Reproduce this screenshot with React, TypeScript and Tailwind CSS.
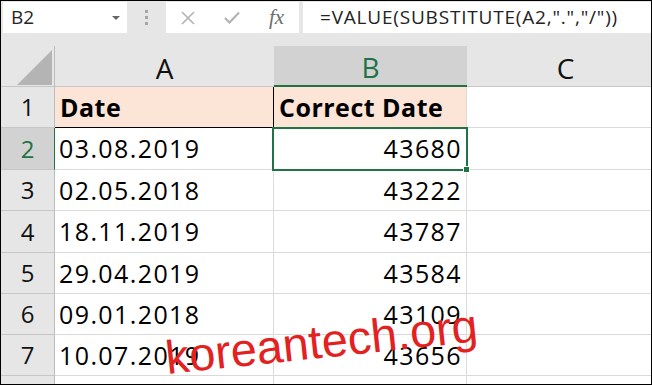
import React from "react";

const ROWS = [
  { n: 1, a: "Date", b: "Correct Date", h: "h-[41px]" },
  { n: 2, a: "03.08.2019", b: "43680", h: "h-[42px]" },
  { n: 3, a: "02.05.2018", b: "43222", h: "h-[41px]" },
  { n: 4, a: "18.11.2019", b: "43787", h: "h-[42px]" },
  { n: 5, a: "29.04.2019", b: "43584", h: "h-[41px]" },
  { n: 6, a: "09.01.2018", b: "43109", h: "h-[41px]" },
  { n: 7, a: "10.07.2019", b: "43656", h: "h-[41px]" },
];

function FormulaBar() {
  return (
    <div className="h-[45px] bg-[#e6e6e6] flex items-start pt-[1px] pl-[2px]">
      {/* name box */}
      <div className="w-[124px] h-[31px] bg-white flex items-center justify-between pl-[8px] pr-[7px]">
        <span className="text-[19px] leading-none text-[#262626]">B2</span>
        <svg width="8" height="4" viewBox="0 0 8 4">
          <polygon points="0,0 8,0 4,4" fill="#666" />
        </svg>
      </div>

      {/* grip dots */}
      <div className="w-[39px] h-[31px] flex flex-col items-center justify-center gap-[3px]">
        <div className="w-[3px] h-[3px] bg-[#a6a6a6]" />
        <div className="w-[3px] h-[3px] bg-[#a6a6a6]" />
        <div className="w-[3px] h-[3px] bg-[#a6a6a6]" />
      </div>

      {/* cancel / enter / fx */}
      <div className="w-[133px] h-[31px] bg-white flex items-center">
        <svg width="14" height="14" viewBox="0 0 14 14" className="ml-[15px]">
          <path d="M1 1 L13 13 M13 1 L1 13" stroke="#b3b3b3" strokeWidth="1.6" fill="none" />
        </svg>
        <svg width="16" height="13" viewBox="0 0 16 13" className="ml-[29px]">
          <path d="M1 7 L5.5 11.5 L15 1.5" stroke="#b3b3b3" strokeWidth="2.2" fill="none" />
        </svg>
        <span className="ml-[29px] text-[21px] leading-none italic text-[#6e6e6e] font-['Liberation_Serif',serif]">
          fx
        </span>
      </div>

      {/* formula */}
      <div className="ml-[4px] flex-1 h-[31px] bg-white flex items-center pl-[17px]">
        <span className="text-[19px] leading-none tracking-[0.8px] text-[#222]">
          =VALUE(SUBSTITUTE(A2,".","/"))
        </span>
      </div>
    </div>
  );
}

function HeaderRow() {
  return (
    <div className="flex h-[41px] bg-[#e6e6e6]">
      <div className="w-[54px] shrink-0 border-r border-b border-r-[#bdbdbd] border-b-[#c6c6c6] relative">
        <svg width="53" height="40" viewBox="0 0 53 40" className="absolute left-0 top-0">
          <polygon points="16,39 51,39 51,4" fill="#b4b4b4" />
        </svg>
      </div>
      <div className="w-[219px] shrink-0 border-b border-b-[#c6c6c6] flex items-center justify-center pt-[3px]">
        <span className="text-[28px] leading-none text-[#111]">A</span>
      </div>
      <div className="w-[193px] shrink-0 bg-[#d2d2d2] border-b-2 border-b-[#217346] flex items-center justify-center pt-[3px]">
        <span className="text-[28px] leading-none text-[#217346]">B</span>
      </div>
      <div className="w-[197px] shrink-0 border-b border-b-[#c6c6c6] flex items-center justify-center pt-[3px]">
        <span className="text-[28px] leading-none text-[#111]">C</span>
      </div>
    </div>
  );
}

export default function App() {
  return (
    <div className="w-[652px] h-[385px] border border-black bg-white relative overflow-hidden font-['Open_Sans',sans-serif]">
      <FormulaBar />
      <HeaderRow />

      {ROWS.map((r) => {
        const head = r.n === 1;
        const sel = r.n === 2;
        return (
          <div key={r.n} className={`flex ${r.h}`}>
            <div
              className={
                sel
                  ? "w-[54px] shrink-0 flex items-center justify-center border-r border-b border-r-[#217346] border-b-[#c6c6c6] bg-[#d2d2d2] text-[#217346] text-[24px] leading-none"
                  : "w-[54px] shrink-0 flex items-center justify-center border-r border-b border-r-[#bdbdbd] border-b-[#c6c6c6] bg-[#e6e6e6] text-[#111] text-[24px] leading-none"
              }
            >
              {r.n}
            </div>
            <div
              className={
                head
                  ? "w-[219px] shrink-0 flex items-center pl-[5px] border-r border-b border-black bg-[#fce4d6] text-[25px] leading-none font-bold tracking-[0.5px] text-black"
                  : "w-[219px] shrink-0 flex items-center pl-[4px] border-r border-b border-[#dadada] text-[25px] leading-none tracking-[1.4px] text-black"
              }
            >
              {r.a}
            </div>
            <div
              className={
                head
                  ? "w-[193px] shrink-0 flex items-center pl-[5px] border-r border-b border-[#dadada] bg-[#fce4d6] text-[25px] leading-none font-bold tracking-[0.5px] text-black"
                  : "w-[193px] shrink-0 flex items-center justify-end pr-[4px] border-r border-b border-[#dadada] text-[25px] leading-none tracking-[1.4px] text-black"
              }
            >
              {r.b}
            </div>
            <div className="w-[197px] shrink-0 border-b border-[#dadada]" />
          </div>
        );
      })}

      {/* row 8, mostly out of view */}
      <div className="flex h-[20px]">
        <div className="w-[54px] shrink-0 border-r border-r-[#bdbdbd] bg-[#e6e6e6]" />
        <div className="w-[219px] shrink-0 border-r border-[#dadada]" />
        <div className="w-[193px] shrink-0 border-r border-[#dadada]" />
        <div className="w-[197px] shrink-0" />
      </div>

      {/* active cell B2 */}
      <div className="absolute left-[271px] top-[126px] w-[196px] h-[44px] border-2 border-[#217346]" />
      <div className="absolute left-[462px] top-[165px] w-[7px] h-[7px] bg-[#217346] border border-white" />

      {/* watermark */}
      <div className="absolute left-[167px] top-[333px] origin-bottom-left -rotate-6 text-[47px] leading-none text-[#e3211f] font-['Liberation_Sans',sans-serif] whitespace-nowrap">
        koreantech.org
      </div>
    </div>
  );
}
